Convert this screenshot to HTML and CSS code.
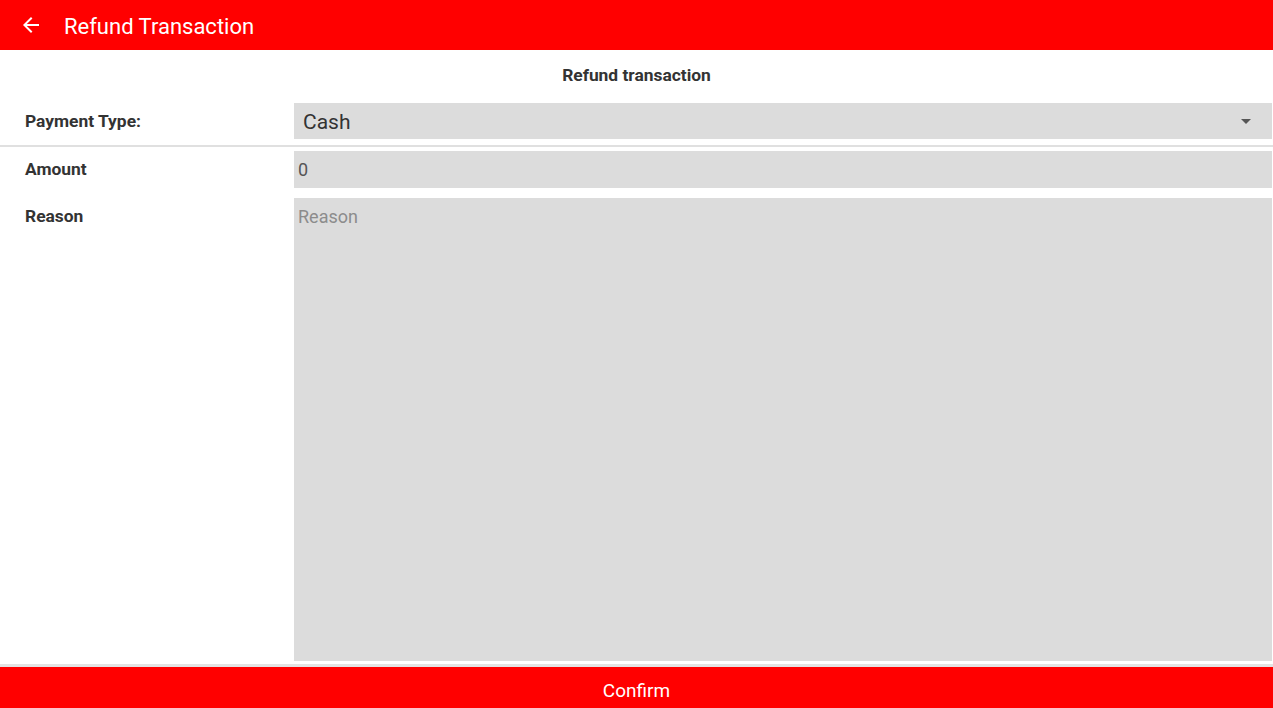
FILE: index.html
```html
<!DOCTYPE html>
<html>
<head>
<meta charset="utf-8">
<link rel="stylesheet" href="styles.css">
</head>
<body>
<div class="app">
  <header class="appbar">
    <svg class="back" width="24" height="24" viewBox="0 0 24 24"><path d="M20 11H7.83l5.59-5.59L12 4l-8 8 8 8 1.41-1.41L7.83 13H20v-2z" fill="#fff"/></svg>
    <span class="appbar-title">Refund Transaction</span>
  </header>
  <main class="content">
    <div class="section-title">Refund transaction</div>
    <div class="row row-select">
      <label class="label">Payment Type:</label>
      <div class="select"><span>Cash</span><span class="caret"></span></div>
    </div>
    <div class="divider"></div>
    <div class="row row-amount">
      <label class="label">Amount</label>
      <div class="input">0</div>
    </div>
    <div class="row row-reason">
      <label class="label">Reason</label>
      <div class="textarea">Reason</div>
    </div>
  </main>
  <div class="bottom-line"></div>
  <footer class="confirm">Confirm</footer>
</div>
</body>
</html>
```
FILE: styles.css
```css
html, body { margin: 0; padding: 0; }
body { font-family: Roboto, "Noto Sans", sans-serif; background: #fff; }
.app { width: 1273px; height: 708px; display: flex; flex-direction: column; overflow: hidden; }
.appbar { height: 50px; background: #ff0000; display: flex; align-items: center; flex-shrink: 0; }
.back { margin-left: 19px; margin-right: 21px; margin-bottom: 1px; }
.appbar-title { color: #fff; font-size: 22px; line-height: 1; padding-top: 3px; }
.content { flex: 1; display: flex; flex-direction: column; }
.section-title { text-align: center; font-weight: 700; font-size: 17.4px; color: #333; height: 53px; line-height: 50px; }
.row { display: flex; }
.label { width: 269px; padding-left: 25px; font-weight: 700; font-size: 17.4px; color: #333; flex-shrink: 0; }
.row-select { height: 36px; align-items: center; }
.select { flex: 1; height: 36px; background: #dcdcdc; margin-right: 1px; display: flex; align-items: center; justify-content: space-between; padding-left: 9px; padding-right: 21px; font-size: 21px; color: #333; }
.select span:first-child { padding-top: 2px; }
.caret { width: 0; height: 0; border-left: 5px solid transparent; border-right: 5px solid transparent; border-top: 5px solid #555; }
.divider { height: 2px; background: #e0e0e0; margin-top: 6px; }
.row-amount { margin-top: 4px; height: 37px; align-items: center; }
.row-amount .label { padding-bottom: 2px; }
.input { flex: 1; height: 37px; background: #dcdcdc; margin-right: 1px; display: flex; align-items: center; padding-left: 4px; font-size: 18px; color: #555; }
.row-reason { margin-top: 10px; height: 463px; }
.row-reason .label { padding-top: 8px; }
.textarea { flex: 1; background: #dcdcdc; margin-right: 1px; padding: 8px 4px; font-size: 18px; color: #8c8c8c; }
.bottom-line { height: 3px; margin-top: 3px; background: #e3e3e3; flex-shrink: 0; }
.confirm { height: 41px; background: #ff0000; color: #fff; text-align: center; line-height: 48px; font-size: 19px; flex-shrink: 0; }
```
